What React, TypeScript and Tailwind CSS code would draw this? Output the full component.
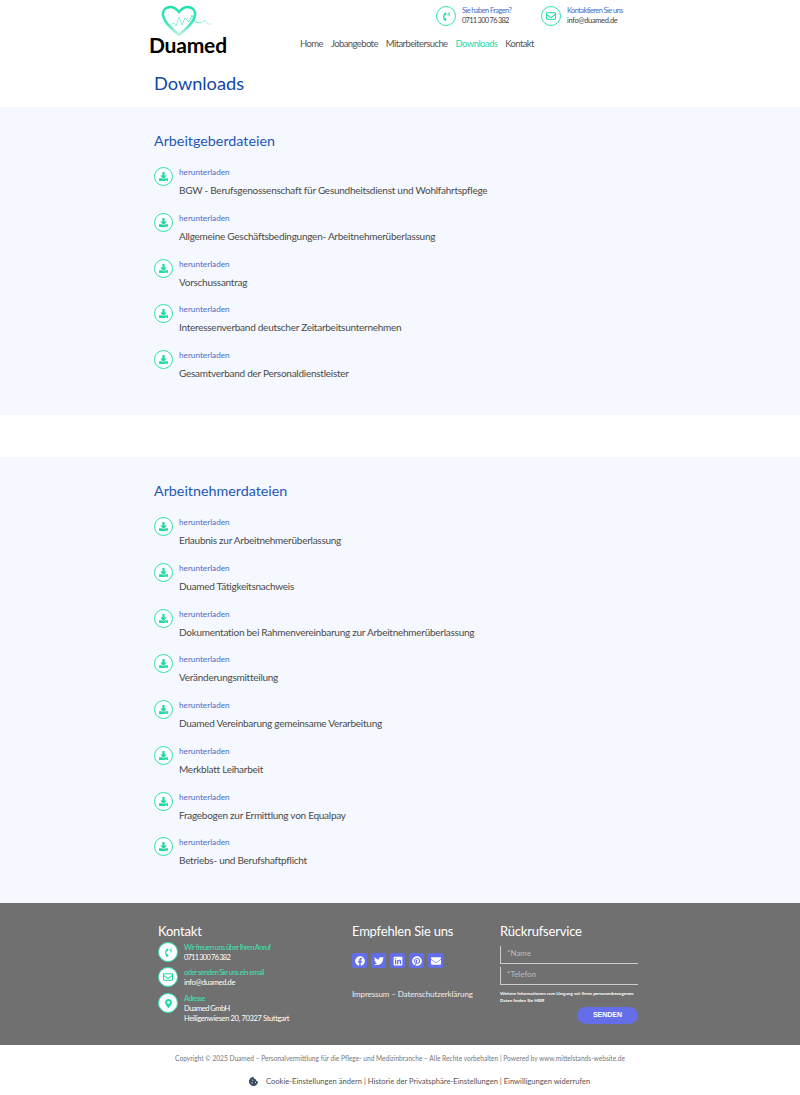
import React from "react";
import { FaFacebook, FaTwitter, FaLinkedin, FaPinterest, FaEnvelope, FaRegEnvelope, FaPhoneVolume, FaMapMarkerAlt, FaDownload, FaCookieBite } from "react-icons/fa";

const g1 = ["BGW - Berufsgenossenschaft für Gesundheitsdienst und Wohlfahrtspflege", "Allgemeine Geschäftsbedingungen- Arbeitnehmerüberlassung", "Vorschussantrag", "Interessenverband deutscher Zeitarbeitsunternehmen", "Gesamtverband der Personaldienstleister"];
const g2 = ["Erlaubnis zur Arbeitnehmerüberlassung", "Duamed Tätigkeitsnachweis", "Dokumentation bei Rahmenvereinbarung zur Arbeitnehmerüberlassung", "Veränderungsmitteilung", "Duamed Vereinbarung gemeinsame Verarbeitung", "Merkblatt Leiharbeit", "Fragebogen zur Ermittlung von Equalpay", "Betriebs- und Berufshaftpflicht"];

function Row({ title }: { title: string }) {
  return (
    <div className="flex h-[45.75px] items-start">
      <div className="flex h-[19px] w-[19px] items-center justify-center rounded-full border-[1.5px] border-[#2de3b5] bg-white text-[#1fd8a8]">
        <FaDownload size={9} />
      </div>
      <div className="ml-[6px] flex flex-col">
        <div className="h-[17px] text-[8.2px] leading-[11px] text-[#4a6cc4]">herunterladen</div>
        <div className="text-[10px] leading-[13px] tracking-[-0.26px] text-[#4a4a4a]">{title}</div>
      </div>
    </div>
  );
}

function Section({ title, items, h }: { title: string; items: string[]; h: string }) {
  return (
    <section className={`bg-[#f5f8fe] pl-[154px] pt-[24px] ${h}`}>
      <h2 className="mb-[16px] text-[14.3px] leading-[20px] font-normal text-[#2456b8]">{title}</h2>
      {items.map((t) => <Row key={t} title={t} />)}
    </section>
  );
}

function Circle({ children, cls = "" }: { children: React.ReactNode; cls?: string }) {
  return <div className={`flex h-[20px] w-[20px] shrink-0 items-center justify-center rounded-full border border-[#2de3b5] bg-white text-[#1fd8a8] ${cls}`}>{children}</div>;
}

export default function App() {
  return (
    <div className="w-[800px] bg-white font-['Lato',sans-serif]">
      <header className="relative h-[107px]">
        <div className="flex">
          <div className="ml-[149px] w-[141px] pt-[5px]">
            <svg width="70" height="32" viewBox="0 0 70 32" className="ml-[12px] block">
              <defs><linearGradient id="h" x1="0" y1="0" x2="0" y2="1"><stop offset="0" stopColor="#1fe0ae" /><stop offset="0.6" stopColor="#3fe6bd" /><stop offset="1" stopColor="#bdf6e6" /></linearGradient><linearGradient id="e" x1="0" y1="0" x2="1" y2="0"><stop offset="0" stopColor="#7eedd0" /><stop offset="0.6" stopColor="#28e0b2" /><stop offset="1" stopColor="#d5f9ef" /></linearGradient></defs>
              <path d="M18 30 C10 23 3 17 2 10 C1 3 10 -2 18 7 C26 -2 35 3 34 10 C33 17 26 23 18 30Z" fill="none" stroke="url(#h)" strokeWidth="2.5" />
              <path d="M9 20 L13 18 L15 21 L18 12 L21 20 L24 13 L28 17 L31 10 L34 17 L40 18 L44 15 L47 19 L53 19" fill="none" stroke="url(#e)" strokeWidth="0.7" />
            </svg>
            <div className="mt-[-1px] text-[21px] leading-[18px] font-bold tracking-[-0.2px] text-black">Duamed</div>
          </div>
          <div className="ml-[10px] flex flex-col">
            <div className="ml-[136px] flex pt-[6px]">
              <div className="flex w-[105px] items-center gap-[6px]">
                <Circle><FaPhoneVolume size={9} /></Circle>
                <div className="text-[7.5px] leading-[10px]"><div className="tracking-[-0.6px] text-[#4a6cc4]">Sie haben Fragen?</div><div className="tracking-[-0.75px] text-[#444]">0711 300 76 382</div></div>
              </div>
              <div className="flex items-center gap-[6px]">
                <Circle><FaRegEnvelope size={10} /></Circle>
                <div className="text-[7.5px] leading-[10px]"><div className="tracking-[-0.6px] text-[#4a6cc4]">Kontaktieren Sie uns</div><div className="tracking-[-0.35px] text-[#444]">info@duamed.de</div></div>
              </div>
            </div>
            <nav className="mt-[11px] flex gap-[8px] text-[9.5px] leading-[14px] tracking-[-0.6px] text-[#555]">
              <span>Home</span><span>Jobangebote</span><span>Mitarbeitersuche</span><span className="text-[#1fd8a8]">Downloads</span><span>Kontakt</span>
            </nav>
          </div>
        </div>
        <h1 className="absolute left-[154px] top-[70px] text-[18.2px] leading-[26px] font-normal text-[#0f46a8]">Downloads</h1>
      </header>
      <Section title="Arbeitgeberdateien" items={g1} h="h-[308px]" />
      <div className="h-[42px]" />
      <Section title="Arbeitnehmerdateien" items={g2} h="h-[446px]" />
      <footer className="flex h-[142px] bg-[#707070] text-white">
        <div className="ml-[158px] w-[194px] pt-[19px]">
          <div className="text-[13px] leading-[18px] tracking-[-0.2px]">Kontakt</div>
          <div className="mt-[2px] flex flex-col gap-[5px]">
            <div className="flex items-center gap-[6px]"><Circle><FaPhoneVolume size={9} /></Circle><div className="translate-y-[1px] text-[7.5px] leading-[10px]"><div className="tracking-[-0.6px] text-[#3fe0b4]">Wir freuen uns über Ihren Anruf</div><div className="tracking-[-0.8px]">0711 300 76 382</div></div></div>
            <div className="flex items-center gap-[6px]"><Circle><FaRegEnvelope size={10} /></Circle><div className="translate-y-[1px] text-[7.5px] leading-[10px]"><div className="tracking-[-0.6px] text-[#3fe0b4]">oder senden Sie uns ein email</div><div className="tracking-[-0.3px]">info@duamed.de</div></div></div>
            <div className="flex items-start gap-[6px]"><Circle cls="mt-[1px]"><FaMapMarkerAlt size={9} /></Circle><div className="translate-y-[2px] text-[7.5px] leading-[10px]"><div className="tracking-[-0.8px] text-[#3fe0b4]">Adresse</div><div className="tracking-[-0.5px]">Duamed GmbH</div><div className="tracking-[-0.35px]">Heiligenwiesen 20, 70327 Stuttgart</div></div></div>
          </div>
        </div>
        <div className="w-[148px] pt-[19px]">
          <div className="text-[13px] leading-[18px] tracking-[-0.2px]">Empfehlen Sie uns</div>
          <div className="mt-[13px] flex gap-[4px]">
            {[FaFacebook, FaTwitter, FaLinkedin, FaPinterest, FaEnvelope].map((I, i) => (
              <div key={i} className="flex h-[15px] w-[15px] items-center justify-center rounded-[2px] bg-[#636ee8]"><I size={10} /></div>
            ))}
          </div>
          <div className="mt-[20px] text-[8px] leading-[12px] tracking-[-0.1px] text-[#eee]">Impressum – Datenschutzerklärung</div>
        </div>
        <div className="w-[138px] pt-[19px]">
          <div className="text-[13px] leading-[18px] tracking-[-0.2px]">Rückrufservice</div>
          <div className="mt-[6px] h-[18px] border-b border-l border-[#ccc] pl-[6px] text-[8px] leading-[15px] text-[#bbb]">*Name</div>
          <div className="mt-[3px] h-[18px] border-b border-l border-[#ccc] pl-[6px] text-[8px] leading-[15px] text-[#bbb]">*Telefon</div>
          <div className="mt-[5px] text-[4.5px] leading-[7px] font-bold">Weitere Informationen zum Umgang mit Ihren personenbezogenen Daten finden Sie HIER</div>
          <div className="mt-[3px] ml-[77px] flex h-[17px] w-[61px] items-center justify-center rounded-full bg-[#636ee8] text-[7px] font-bold font-['Liberation_Sans',sans-serif]">SENDEN</div>
        </div>
      </footer>
      <div className="h-[50px]">
        <div className="pt-[8px] text-center text-[6.6px] leading-[10px] text-[#777]">Copyright © 2025 Duamed – Personalvermittlung für die Pflege- und Medizinbranche – Alle Rechte vorbehalten | Powered by www.mittelstands-website.de</div>
        <div className="mt-[12px] ml-[249px] flex items-center gap-[8px] text-[7.6px] leading-[12px] text-[#555]"><FaCookieBite size={9} className="text-[#3a4a60]" /><span>Cookie-Einstellungen ändern | Historie der Privatsphäre-Einstellungen | Einwilligungen widerrufen</span></div>
      </div>
    </div>
  );
}
